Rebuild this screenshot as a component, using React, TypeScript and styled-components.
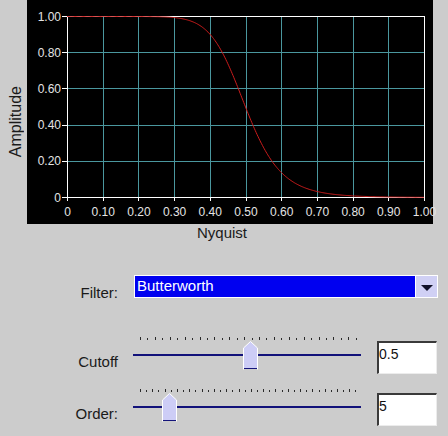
import styled, { createGlobalStyle } from "styled-components";

const GlobalStyle = createGlobalStyle`
  html, body {
    margin: 0;
    padding: 0;
    background: #cccccc;
  }
  body {
    font-family: "Liberation Sans", Arial, sans-serif;
  }
`;

const Window = styled.div`
  width: 448px;
  height: 436px;
  overflow: hidden;
  background: #cccccc;
  color: #1a1a1a;
`;

const ChartRow = styled.div`
  display: flex;
  height: 224px;
`;

const AxisTitle = styled.div`
  width: 27px;
  box-sizing: border-box;
  padding: 20px 0 0 7px;
  display: flex;
  align-items: center;

  span {
    writing-mode: vertical-rl;
    transform: rotate(180deg);
    font-size: 16px;
    line-height: 17px;
  }
`;

const PlotPanel = styled.div`
  width: 406px;
  height: 224px;
  background: #000;
`;

const AxisCaption = styled.div`
  height: 18px;
  line-height: 18px;
  font-size: 15px;
  text-align: center;
  padding-right: 4px;
`;

const Controls = styled.div`
  padding-top: 33px;
`;

const FilterRow = styled.div`
  display: flex;
  height: 23px;
`;

const SliderRow = styled.div`
  display: flex;
  height: 52px;
  margin-top: ${(p: { $first?: boolean }) => (p.$first ? "38px" : "0")};
`;

const Label = styled.div<{ $top: number }>`
  width: 118px;
  flex: none;
  text-align: right;
  font-size: 15px;
  line-height: 17px;
  margin-top: ${(p) => p.$top}px;
`;

const Dropdown = styled.div`
  display: flex;
  width: 304px;
  height: 23px;
  margin-left: 16px;
  box-sizing: border-box;
  border: 1px solid #fff;
  background: #0000f0;
`;

const DropText = styled.div`
  flex: 1;
  color: #fff;
  font-size: 15px;
  line-height: 17px;
  padding: 1px 0 0 2px;
`;

const DropButton = styled.div`
  width: 22px;
  border-left: 1px solid #fff;
  background: #d0d0f4;
  display: flex;
  align-items: center;
  justify-content: center;
  padding-top: 2px;
  box-sizing: border-box;
`;

const Arrow = styled.div`
  width: 0;
  height: 0;
  border-left: 6px solid transparent;
  border-right: 6px solid transparent;
  border-top: 6px solid #101028;
`;

const Slider = styled.div`
  position: relative;
  width: 228px;
  height: 34px;
  margin-left: 15px;
  flex: none;
`;

const TickRow = styled.div`
  display: flex;
  justify-content: space-between;
  height: 3px;
  margin: 1px 4px 0 7px;
`;

const Tick = styled.div<{ $short: boolean }>`
  width: 1px;
  height: ${(p) => (p.$short ? 2 : 3)}px;
  margin-top: ${(p) => (p.$short ? 1 : 0)}px;
  background: #2a2a2a;
`;

const Track = styled.div`
  margin-top: 14px;
  height: 2px;
  background: #12127a;
`;

const Thumb = styled.svg`
  position: absolute;
  top: 5px;
  display: block;
`;

const ValueBox = styled.div`
  width: 60px;
  height: 33px;
  margin: 5px 0 0 16px;
  box-sizing: border-box;
  background: #fff;
  border-top: 2px solid #3a3a3a;
  border-left: 2px solid #3a3a3a;
  border-right: 1px solid #ececec;
  border-bottom: 1px solid #ececec;
  font-size: 14px;
  line-height: 17px;
  padding-top: 3px;
  color: #111;
`;

const X0 = 40;
const X1 = 397;
const Y0 = 16;
const Y1 = 197;
const xAt = (f: number) => X0 + (X1 - X0) * f;
const yAt = (a: number) => Y1 - (Y1 - Y0) * a;
const crisp = (v: number) => Math.round(v) + 0.5;

function curvePath() {
  const pts: string[] = [];
  for (let i = 0; i <= 400; i++) {
    const f = i / 400;
    const a = 1 / (1 + Math.pow(f / 0.5, 10));
    pts.push(`${xAt(f).toFixed(2)},${(yAt(a) + 0.5).toFixed(2)}`);
  }
  return "M" + pts.join(" L");
}

function Chart() {
  const xs = Array.from({ length: 11 }, (_, k) => k / 10);
  const ys = Array.from({ length: 6 }, (_, k) => k / 5);
  const labelStyle = { fontFamily: "'Liberation Sans', Arial, sans-serif", fontSize: 12 };

  return (
    <svg width={406} height={224} style={{ display: "block", overflow: "visible" }}>
      {xs.slice(1, 10).map((f) => (
        <line key={"gx" + f} x1={crisp(xAt(f))} x2={crisp(xAt(f))} y1={Y0} y2={Y1} stroke="#4a979e" />
      ))}
      {ys.slice(1, 5).map((a) => (
        <line key={"gy" + a} x1={X0} x2={X1} y1={crisp(yAt(a))} y2={crisp(yAt(a))} stroke="#4a979e" />
      ))}
      <rect x={X0 + 0.5} y={Y0 + 0.5} width={X1 - X0} height={Y1 - Y0} fill="none" stroke="#fff" />
      {xs.map((f) => (
        <g key={"tx" + f}>
          <line x1={crisp(xAt(f))} x2={crisp(xAt(f))} y1={Y1} y2={Y1 + 4} stroke="#fff" />
          <text x={xAt(f) + 0.5} y={216} textAnchor="middle" fill="#e4e4e4" style={labelStyle}>
            {f === 0 ? "0" : f.toFixed(2)}
          </text>
        </g>
      ))}
      {ys.map((a) => (
        <g key={"ty" + a}>
          <line x1={35} x2={40} y1={crisp(yAt(a))} y2={crisp(yAt(a))} stroke="#fff" />
          <text x={34} y={yAt(a) + 4.5} textAnchor="end" fill="#e4e4e4" style={labelStyle}>
            {a === 0 ? "0" : a.toFixed(2)}
          </text>
        </g>
      ))}
      <path d={curvePath()} fill="none" stroke="#cc1c1c" strokeWidth={1} />
    </svg>
  );
}

function SliderThumb({ left }: { left: number }) {
  return (
    <Thumb width={15} height={29} style={{ left }}>
      <polygon points="0.5,28 0.5,7 7.5,0.5 14.5,7 14.5,28" fill="#cdcdf6" />
      <polyline points="0.5,28.5 0.5,7 7.5,0.5 14.5,7 14.5,28.5" fill="none" stroke="#fff" />
      <line x1={1} x2={14} y1={27.5} y2={27.5} stroke="#14147a" />
    </Thumb>
  );
}

function TickSlider({ ticks, thumbLeft }: { ticks: number; thumbLeft: number }) {
  return (
    <Slider>
      <TickRow>
        {Array.from({ length: ticks }, (_, i) => (
          <Tick key={i} $short={i % 2 === 1} />
        ))}
      </TickRow>
      <Track />
      <SliderThumb left={thumbLeft} />
    </Slider>
  );
}

export default function App() {
  return (
    <Window>
      <GlobalStyle />
      <ChartRow>
        <AxisTitle>
          <span>Amplitude</span>
        </AxisTitle>
        <PlotPanel>
          <Chart />
        </PlotPanel>
      </ChartRow>
      <AxisCaption>Nyquist</AxisCaption>
      <Controls>
        <FilterRow>
          <Label $top={9}>Filter:</Label>
          <Dropdown>
            <DropText>Butterworth</DropText>
            <DropButton>
              <Arrow />
            </DropButton>
          </Dropdown>
        </FilterRow>
        <SliderRow $first>
          <Label $top={17}>Cutoff</Label>
          <TickSlider ticks={30} thumbLeft={110} />
          <ValueBox>0.5</ValueBox>
        </SliderRow>
        <SliderRow>
          <Label $top={17}>Order:</Label>
          <TickSlider ticks={36} thumbLeft={29} />
          <ValueBox>5</ValueBox>
        </SliderRow>
      </Controls>
    </Window>
  );
}
